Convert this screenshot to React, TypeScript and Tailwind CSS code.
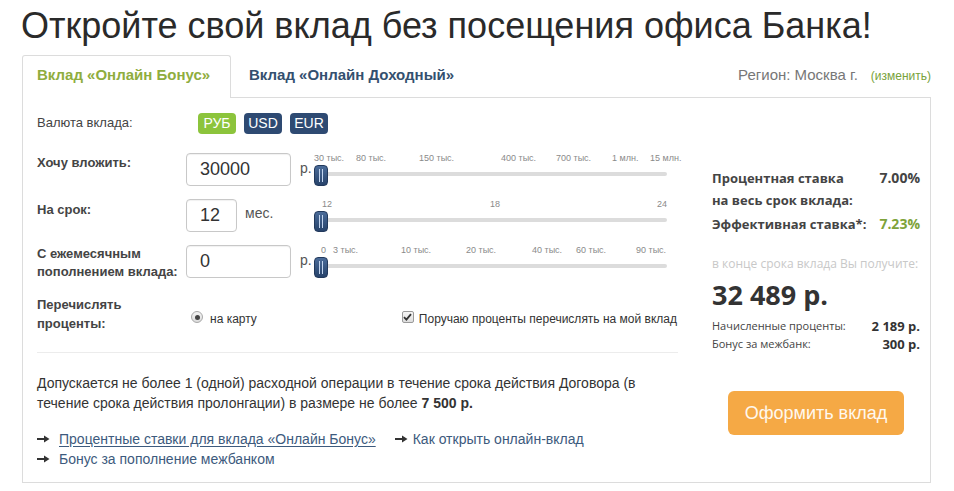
import React from "react";

type Tick = [string, number];

const Handle = () => (
  <div className="absolute left-0 top-[12px] flex h-[21px] w-[14px] items-center justify-center gap-[2px] rounded-[4px] border border-[#22395c] bg-gradient-to-b from-[#4a6b99] to-[#27436b]">
    <div className="h-[13px] w-px bg-[#c2d4ee]" />
    <div className="h-[13px] w-px bg-[#c2d4ee]" />
  </div>
);

const Slider = ({ ticks }: { ticks: Tick[] }) => (
  <div className="relative h-[34px] w-[364px]">
    {ticks.map(([t, x]) => (
      <span
        key={t}
        className="absolute top-0 whitespace-nowrap text-[9px] leading-[10px] text-[#8a8a8a]"
        style={{ left: x }}
      >
        {t}
      </span>
    ))}
    <div className="absolute left-[9px] top-[19px] h-[4px] w-[344px] rounded-full bg-[#dcdcdc]" />
    <Handle />
  </div>
);

const Arrow = ({ mr }: { mr: string }) => (
  <svg width="13" height="8" viewBox="0 0 13 8" className={`${mr} shrink-0`}>
    <rect x="0" y="3" width="8" height="2" fill="#333" />
    <path d="M7 0.5 L12.5 4 L7 7.5 Z" fill="#333" />
  </svg>
);

const Input = ({ value, w }: { value: string; w: string }) => (
  <div
    className={`${w} flex h-[33px] items-center rounded-[4px] border border-[#c8c8c8] pl-[13px] text-[18px] text-[#333] shadow-[inset_0_1px_1px_rgba(0,0,0,0.06)]`}
  >
    {value}
  </div>
);

export default function App() {
  return (
    <div className="h-[491px] w-[954px] overflow-hidden bg-white font-['Liberation_Sans',Arial,sans-serif] text-[#333]">
      <h1 className="pl-[21px] pt-[6px] text-[36px] leading-[40px] text-[#2a2a2a]">
        Откройте свой вклад без посещения офиса Банка!
      </h1>

      <div className="ml-[22px] mt-[9px] w-[909px]">
        {/* tabs */}
        <div className="flex h-[43px]">
          <div className="h-[43px] w-[209px] rounded-t-[3px] border-l border-r border-t border-[#dcdcdc] bg-white pl-[14px] pt-[10px] text-[15px] font-bold leading-[18px] text-[#8fad3e]">
            Вклад «Онлайн Бонус»
          </div>
          <div className="flex flex-1 items-start border-b border-[#dcdcdc] pt-[11px]">
            <div className="ml-[18px] text-[15px] font-bold leading-[18px] text-[#34506f]">
              Вклад «Онлайн Доходный»
            </div>
            <div className="ml-auto flex items-baseline">
              <span className="text-[15px] leading-[18px] text-[#777]">Регион: Москва г.</span>
              <span className="ml-[13px] text-[12px] leading-[18px] text-[#78a23a]">(изменить)</span>
            </div>
          </div>
        </div>

        {/* panel */}
        <div className="flex border-b border-l border-r border-[#dcdcdc]">
          {/* left column */}
          <div className="w-[655px] pb-[13px] pl-[14px]">
            <div className="mt-[14px] flex h-[22px] items-center">
              <div className="w-[149px] text-[13px] text-[#444]">Валюта вклада:</div>
              <div className="ml-[12px] flex gap-[8px]">
                <span className="flex h-[21px] w-[38px] items-center justify-center rounded-[4px] bg-[#8cc43c] text-[14px] text-white">
                  РУБ
                </span>
                <span className="flex h-[21px] w-[38px] items-center justify-center rounded-[4px] bg-[#2e4a72] text-[14px] text-white">
                  USD
                </span>
                <span className="flex h-[21px] w-[38px] items-center justify-center rounded-[4px] bg-[#2e4a72] text-[14px] text-white">
                  EUR
                </span>
              </div>
            </div>

            {/* row 1 */}
            <div className="mt-[19px] flex h-[34px] items-start">
              <div className="w-[149px] pt-[1px] text-[13px] font-bold leading-[18px] text-[#444]">Хочу вложить:</div>
              <div className="flex w-[128px]">
                <Input value="30000" w="w-[105px]" />
                <span className="ml-[9px] mt-[6px] text-[14px] leading-[18px] text-[#555]">р.</span>
              </div>
              <Slider
                ticks={[
                  ["30 тыс.", 0],
                  ["80 тыс.", 42],
                  ["150 тыс.", 105],
                  ["400 тыс.", 187],
                  ["700 тыс.", 242],
                  ["1 млн.", 298],
                  ["15 млн.", 336],
                ]}
              />
            </div>

            {/* row 2 */}
            <div className="mt-[12px] flex h-[34px] items-start">
              <div className="w-[149px] pt-[2px] text-[13px] font-bold leading-[18px] text-[#444]">На срок:</div>
              <div className="flex w-[128px]">
                <Input value="12" w="w-[51px]" />
                <span className="ml-[8px] mt-[5px] text-[14px] leading-[18px] text-[#555]">мес.</span>
              </div>
              <Slider
                ticks={[
                  ["12", 8],
                  ["18", 176],
                  ["24", 343],
                ]}
              />
            </div>

            {/* row 3 */}
            <div className="mt-[12px] flex h-[34px] items-start">
              <div className="w-[149px] text-[13px] font-bold leading-[18px] text-[#444]">
                С ежемесячным
                <br />
                пополнением вклада:
              </div>
              <div className="flex w-[128px]">
                <Input value="0" w="w-[105px]" />
                <span className="ml-[9px] mt-[6px] text-[14px] leading-[18px] text-[#555]">р.</span>
              </div>
              <Slider
                ticks={[
                  ["0", 7],
                  ["3 тыс.", 19],
                  ["10 тыс.", 87],
                  ["20 тыс.", 152],
                  ["40 тыс.", 218],
                  ["60 тыс.", 262],
                  ["90 тыс.", 322],
                ]}
              />
            </div>

            {/* row 4 */}
            <div className="mt-[16px] flex h-[38px] items-start">
              <div className="w-[149px] text-[13px] font-bold leading-[19px] text-[#444]">
                Перечислять
                <br />
                проценты:
              </div>
              <div className="flex flex-1 items-start justify-between pl-[5px] pr-[1px] pt-[12px]">
                <div className="flex items-center">
                  <span className="flex h-[12px] w-[12px] items-center justify-center rounded-full border border-[#a8a8a8] bg-gradient-to-b from-[#f4f4f4] to-[#dcdcdc]">
                    <span className="h-[5px] w-[5px] rounded-full bg-[#444]" />
                  </span>
                  <span className="ml-[7px] mt-[4px] text-[12px] leading-[16px] text-[#333]">на карту</span>
                </div>
                <div className="flex items-center">
                  <span className="flex h-[12px] w-[12px] items-center justify-center rounded-[2px] border border-[#9a9a9a] bg-gradient-to-b from-[#f6f6f6] to-[#dedede]">
                    <svg width="9" height="8" viewBox="0 0 9 8">
                      <path d="M1 4.2 L3.4 6.6 L8 1.2" stroke="#333" strokeWidth="1.8" fill="none" />
                    </svg>
                  </span>
                  <span className="ml-[5px] mt-[4px] text-[12px] leading-[16px] text-[#333]">
                    Поручаю проценты перечислять на мой вклад
                  </span>
                </div>
              </div>
            </div>

            <div className="mt-[19px] h-px w-[641px] bg-[#ececec]" />

            <div className="mt-[20px] w-[641px] text-[14px] leading-[20px] text-[#333]">
              <div>Допускается не более 1 (одной) расходной операции в течение срока действия Договора (в</div>
              <div>
                течение срока действия пролонгации) в размере не более <b>7 500 р.</b>
              </div>
            </div>

            <div className="mt-[16px] text-[14px] leading-[20px] text-[#3d5a7d]">
              <div className="flex items-center">
                <Arrow mr="mr-[9px]" />
                <span className="underline decoration-[#3d5a7d] underline-offset-2">
                  Процентные ставки для вклада «Онлайн Бонус»
                </span>
                <span className="ml-[19px] flex items-center">
                  <Arrow mr="mr-[5px]" />
                  <span>Как открыть онлайн-вклад</span>
                </span>
              </div>
              <div className="flex items-center">
                <Arrow mr="mr-[9px]" />
                <span>Бонус за пополнение межбанком</span>
              </div>
            </div>
          </div>

          {/* right column */}
          <div className="ml-[34px] w-[208px] font-['Open_Sans',sans-serif]">
            <div className="mt-[69px] flex justify-between text-[13px] font-bold leading-[22px] text-[#444]">
              <span>
                Процентная ставка
                <br />
                на весь срок вклада:
              </span>
              <span className="text-[14px]">7.00%</span>
            </div>
            <div className="mt-[2px] flex justify-between text-[13px] font-bold leading-[22px] text-[#444]">
              <span>Эффективная ставка*:</span>
              <span className="text-[14px] text-[#7ea33a]">7.23%</span>
            </div>
            <div className="mt-[21px] whitespace-nowrap text-[12px] leading-[16px] text-[#c8c8c8]">
              в конце срока вклада Вы получите:
            </div>
            <div className="mt-[6px] text-[27px] font-bold leading-[34px] text-[#333]">32 489 р.</div>
            <div className="mt-[5px] flex justify-between leading-[18px]">
              <span className="text-[11px] text-[#444]">Начисленные проценты:</span>
              <span className="text-[13px] font-bold text-[#333]">2 189 р.</span>
            </div>
            <div className="flex justify-between leading-[18px]">
              <span className="text-[11px] text-[#444]">Бонус за межбанк:</span>
              <span className="text-[13px] font-bold text-[#333]">300 р.</span>
            </div>
            <div className="mx-auto mt-[38px] flex h-[44px] w-[176px] items-center justify-center rounded-[6px] bg-[#f5a945] font-['Liberation_Sans',Arial,sans-serif] text-[18px] text-[#fff8ee]">
              Оформить вклад
            </div>
          </div>
        </div>
      </div>
    </div>
  );
}
